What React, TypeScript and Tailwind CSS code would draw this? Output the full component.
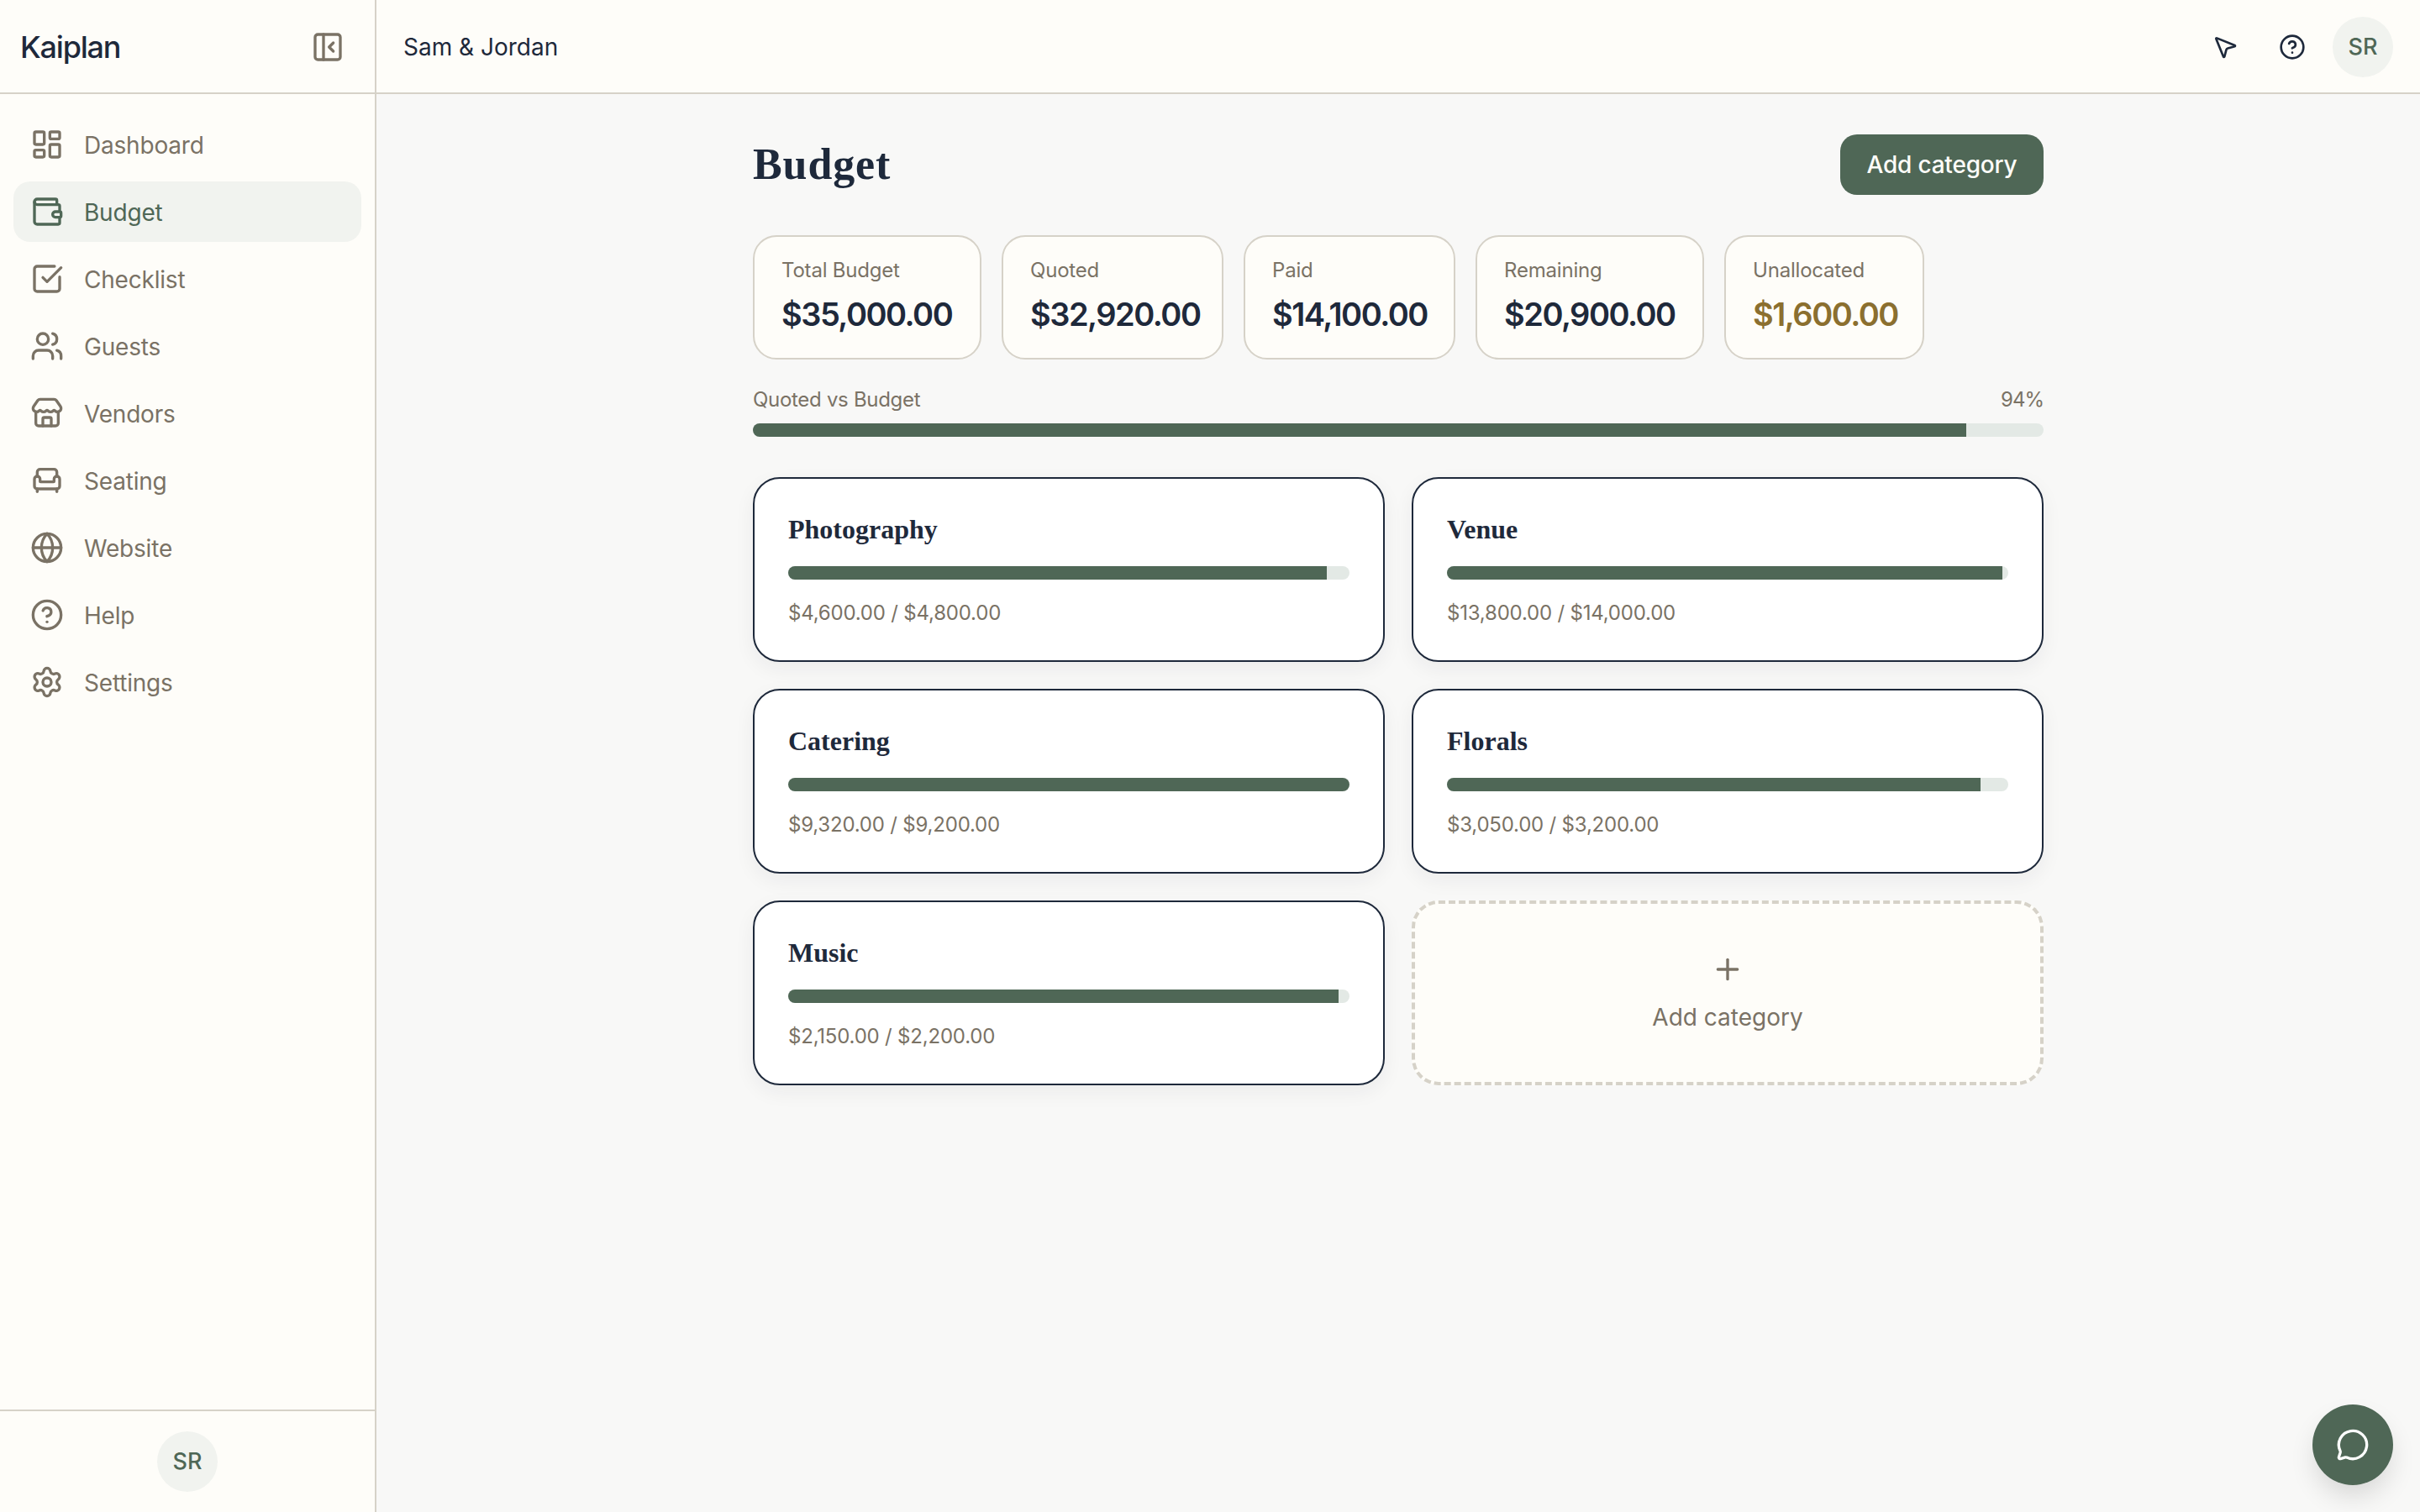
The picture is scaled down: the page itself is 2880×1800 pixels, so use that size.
import {
  Armchair,
  CircleHelp,
  Globe,
  LayoutDashboard,
  MessageCircle,
  MousePointer2,
  PanelLeftClose,
  Plus,
  Settings,
  SquareCheckBig,
  Store,
  Users,
  Wallet,
} from "lucide-react";

const NAV = [
  { label: "Dashboard", icon: LayoutDashboard },
  { label: "Budget", icon: Wallet, active: true },
  { label: "Checklist", icon: SquareCheckBig },
  { label: "Guests", icon: Users },
  { label: "Vendors", icon: Store },
  { label: "Seating", icon: Armchair },
  { label: "Website", icon: Globe },
  { label: "Help", icon: CircleHelp },
  { label: "Settings", icon: Settings },
];

const STATS = [
  { label: "Total Budget", value: "$35,000.00", width: "w-[272px]", tone: "text-[#1e293b]" },
  { label: "Quoted", value: "$32,920.00", width: "w-[264px]", tone: "text-[#1e293b]" },
  { label: "Paid", value: "$14,100.00", width: "w-[252px]", tone: "text-[#1e293b]" },
  { label: "Remaining", value: "$20,900.00", width: "w-[272px]", tone: "text-[#1e293b]" },
  { label: "Unallocated", value: "$1,600.00", width: "w-[238px]", tone: "text-[#8b6f2f]" },
];

const CATEGORIES = [
  { name: "Photography", quoted: 4600, budget: 4800 },
  { name: "Venue", quoted: 13800, budget: 14000 },
  { name: "Catering", quoted: 9320, budget: 9200 },
  { name: "Florals", quoted: 3050, budget: 3200 },
  { name: "Music", quoted: 2150, budget: 2200 },
];

const money = (n: number) =>
  "$" + n.toLocaleString("en-US", { minimumFractionDigits: 2, maximumFractionDigits: 2 });

function Avatar() {
  return (
    <div className="flex h-[72px] w-[72px] items-center justify-center rounded-full bg-[#f1f3ef] text-[27px] font-medium text-[#4f6756]">
      SR
    </div>
  );
}

function Bar({ percent }: { percent: number }) {
  return (
    <div className="h-4 w-full overflow-hidden rounded-full bg-[#e3e9e5]">
      <div className="h-full bg-[#4f6756]" style={{ width: `${Math.min(Math.round(percent), 100)}%` }} />
    </div>
  );
}

export default function App() {
  return (
    <div className="flex h-screen bg-[#f8f8f7] font-['Inter',sans-serif]">
      <aside className="flex w-[448px] shrink-0 flex-col border-r-2 border-[#d6d2c8] bg-[#fefdf9]">
        <div className="flex h-[112px] shrink-0 items-center justify-between border-b-2 border-[#d6d2c8] pl-6 pr-9 pt-0.5">
          <span className="text-[36px] font-[550] tracking-[-1.2px] text-[#1e293b]">Kaiplan</span>
          <PanelLeftClose size={40} className="text-[#7a7265]" />
        </div>
        <nav className="flex flex-1 flex-col gap-2 px-4 pt-6">
          {NAV.map((item) => (
            <div
              key={item.label}
              className={
                item.active
                  ? "flex h-[72px] items-center gap-6 rounded-[20px] bg-[#f1f3ef] px-5 text-[#4f6756]"
                  : "flex h-[72px] items-center gap-6 rounded-[20px] px-5 text-[#7a7265]"
              }
            >
              <item.icon size={40} />
              <span className="pt-px text-[28px] tracking-[-0.2px]">{item.label}</span>
            </div>
          ))}
        </nav>
        <div className="flex justify-center border-t-2 border-[#d6d2c8] py-6">
          <Avatar />
        </div>
      </aside>

      <div className="flex min-w-0 flex-1 flex-col">
        <header className="flex h-[112px] shrink-0 items-center justify-between border-b-2 border-[#d6d2c8] bg-[#fefdf9] pl-8 pr-8 pt-0.5">
          <span className="text-[28px] text-[#1e293b]">Sam &amp; Jordan</span>
          <div className="flex items-center text-[#1e293b]">
            <MousePointer2 size={32} />
            <CircleHelp size={32} className="ml-12" />
            <div className="ml-8">
              <Avatar />
            </div>
          </div>
        </header>

        <main className="flex-1">
          <div className="mx-auto w-[1536px] pt-12">
            <div className="flex h-[72px] items-center justify-between">
              <h1 className="font-['Liberation_Serif',serif] text-[52px] font-bold tracking-[0.9px] text-[#1e293b]">
                Budget
              </h1>
              <button className="flex h-[72px] w-[242px] items-center justify-center rounded-[20px] bg-[#4f6756] text-[28px] font-medium tracking-[-0.2px] text-[#fefdf9]">
                Add category
              </button>
            </div>

            <div className="mt-12 flex gap-6">
              {STATS.map((s) => (
                <div
                  key={s.label}
                  className={`${s.width} h-[148px] rounded-[28px] border-2 border-[#d6d2c8] bg-[#fefdf9] px-8 py-6`}
                >
                  <div className="text-[24px] leading-8 tracking-[-0.2px] text-[#7a7265]">{s.label}</div>
                  <div className={`${s.tone} mt-2 text-[38px] font-semibold leading-[56px] tracking-[-1.5px]`}>
                    {s.value}
                  </div>
                </div>
              ))}
            </div>

            <div className="mt-8 flex h-8 items-center justify-between text-[24px] tracking-[-0.3px] text-[#7a7265]">
              <span>Quoted vs Budget</span>
              <span className="tracking-[-1px]">94%</span>
            </div>
            <div className="mt-3">
              <Bar percent={94} />
            </div>

            <div className="mt-12 grid grid-cols-2 gap-8">
              {CATEGORIES.map((c) => (
                <div
                  key={c.name}
                  className="h-[220px] rounded-[32px] border-2 border-[#1e293b] bg-white px-10 pt-10 shadow-[0_8px_24px_rgba(31,41,55,0.06)]"
                >
                  <div className="font-['Liberation_Serif',serif] text-[32px] font-bold leading-10 text-[#1e293b]">
                    {c.name}
                  </div>
                  <div className="mt-6">
                    <Bar percent={(c.quoted / c.budget) * 100} />
                  </div>
                  <div className="mt-6 text-[24px] leading-8 tracking-[-0.2px] text-[#7a7265]">
                    {money(c.quoted)} / {money(c.budget)}
                  </div>
                </div>
              ))}
              <div className="flex h-[220px] flex-col items-center justify-center rounded-[32px] border-4 border-dashed border-[#d6d2c8] bg-[#fefdf9] pt-0.5 text-[#7a7265]">
                <Plus size={40} />
                <span className="mt-4 text-[28px]">Add category</span>
              </div>
            </div>
          </div>
        </main>
      </div>

      <button className="fixed bottom-8 right-8 flex h-24 w-24 items-center justify-center rounded-full bg-[#4f6756] text-white shadow-[0_16px_32px_-4px_rgba(0,0,0,0.14)]">
        <MessageCircle size={40} />
      </button>
    </div>
  );
}
